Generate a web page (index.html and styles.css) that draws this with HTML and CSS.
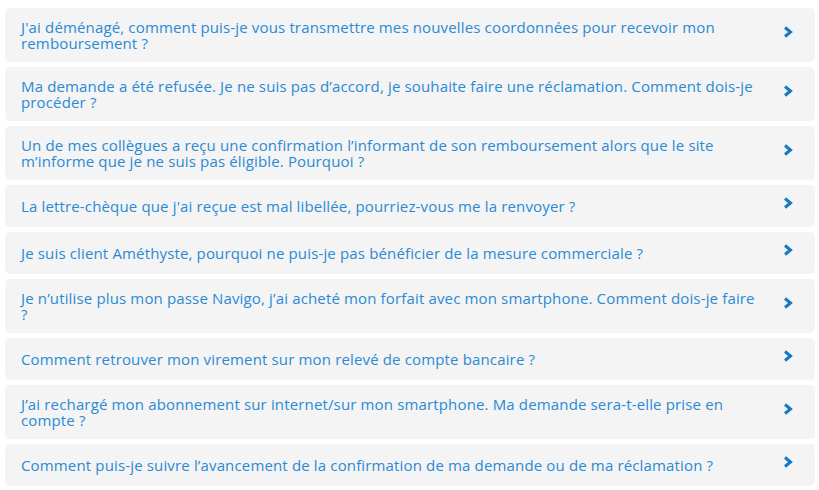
FILE: index.html
```html
<!DOCTYPE html>
<html lang="fr">
  <head>
    <meta charset="UTF-8" />
    <meta name="viewport" content="width=device-width, initial-scale=1.0" />
    <title>Questions fréquentes</title>
    <link rel="stylesheet" href="styles.css">
  </head>
  <body>
    <!-- Liste des questions -->
    <ul class="faq">
      <li class="question">
        <a href="#">J'ai déménagé, comment puis-je vous transmettre mes nouvelles coordonnées pour recevoir mon<br>remboursement ?</a>
        <svg class="chevron" viewBox="0 0 10 12"><polyline points="2,1.5 7.5,6 2,10.5" /></svg>
      </li>
      <li class="question">
        <a href="#">Ma demande a été refusée. Je ne suis pas d’accord, je souhaite faire une réclamation. Comment dois-je<br>procéder ?</a>
        <svg class="chevron" viewBox="0 0 10 12"><polyline points="2,1.5 7.5,6 2,10.5" /></svg>
      </li>
      <li class="question">
        <a href="#">Un de mes collègues a reçu une confirmation l’informant de son remboursement alors que le site<br>m’informe que je ne suis pas éligible. Pourquoi ?</a>
        <svg class="chevron" viewBox="0 0 10 12"><polyline points="2,1.5 7.5,6 2,10.5" /></svg>
      </li>
      <li class="question">
        <a href="#">La lettre-chèque que j'ai reçue est mal libellée, pourriez-vous me la renvoyer ?</a>
        <svg class="chevron" viewBox="0 0 10 12"><polyline points="2,1.5 7.5,6 2,10.5" /></svg>
      </li>
      <li class="question">
        <a href="#">Je suis client Améthyste, pourquoi ne puis-je pas bénéficier de la mesure commerciale ?</a>
        <svg class="chevron" viewBox="0 0 10 12"><polyline points="2,1.5 7.5,6 2,10.5" /></svg>
      </li>
      <li class="question">
        <a href="#">Je n’utilise plus mon passe Navigo, j’ai acheté mon forfait avec mon smartphone. Comment dois-je faire<br>?</a>
        <svg class="chevron" viewBox="0 0 10 12"><polyline points="2,1.5 7.5,6 2,10.5" /></svg>
      </li>
      <li class="question">
        <a href="#">Comment retrouver mon virement sur mon relevé de compte bancaire ?</a>
        <svg class="chevron" viewBox="0 0 10 12"><polyline points="2,1.5 7.5,6 2,10.5" /></svg>
      </li>
      <li class="question">
        <a href="#">J’ai rechargé mon abonnement sur internet/sur mon smartphone. Ma demande sera-t-elle prise en<br>compte ?</a>
        <svg class="chevron" viewBox="0 0 10 12"><polyline points="2,1.5 7.5,6 2,10.5" /></svg>
      </li>
      <li class="question">
        <a href="#">Comment puis-je suivre l’avancement de la confirmation de ma demande ou de ma réclamation ?</a>
        <svg class="chevron" viewBox="0 0 10 12"><polyline points="2,1.5 7.5,6 2,10.5" /></svg>
      </li>
    </ul>
  </body>
</html>
```

FILE: styles.css
```css
:root {
  --bleu-texte: #2a8ad4;
  --bleu-fleche: #1479c4;
  --gris-fond: #f4f4f4;
}

* {
  margin: 0;
  padding: 0;
  box-sizing: border-box;
}

body {
  font-family: "Open Sans", Lato, sans-serif;
  background-color: #fff;
  padding: 8px 4px 0 5px;
}

.faq {
  list-style: none;
  display: flex;
  flex-direction: column;
  gap: 5px;
}

.question {
  background-color: var(--gris-fond);
  border-radius: 5px;
  min-height: 42px;
  padding: 11px 22px 11px 16px;
  display: flex;
  align-items: center;
  gap: 4px;
}

.question a {
  flex: 1;
  color: var(--bleu-texte);
  text-decoration: none;
  font-size: 15px;
  letter-spacing: 0.15px;
  line-height: 16px;
  white-space: nowrap;
}

.chevron {
  width: 10px;
  height: 12px;
  flex-shrink: 0;
  margin-bottom: 6px;
  fill: none;
  stroke: var(--bleu-fleche);
  stroke-width: 3;
}
```
